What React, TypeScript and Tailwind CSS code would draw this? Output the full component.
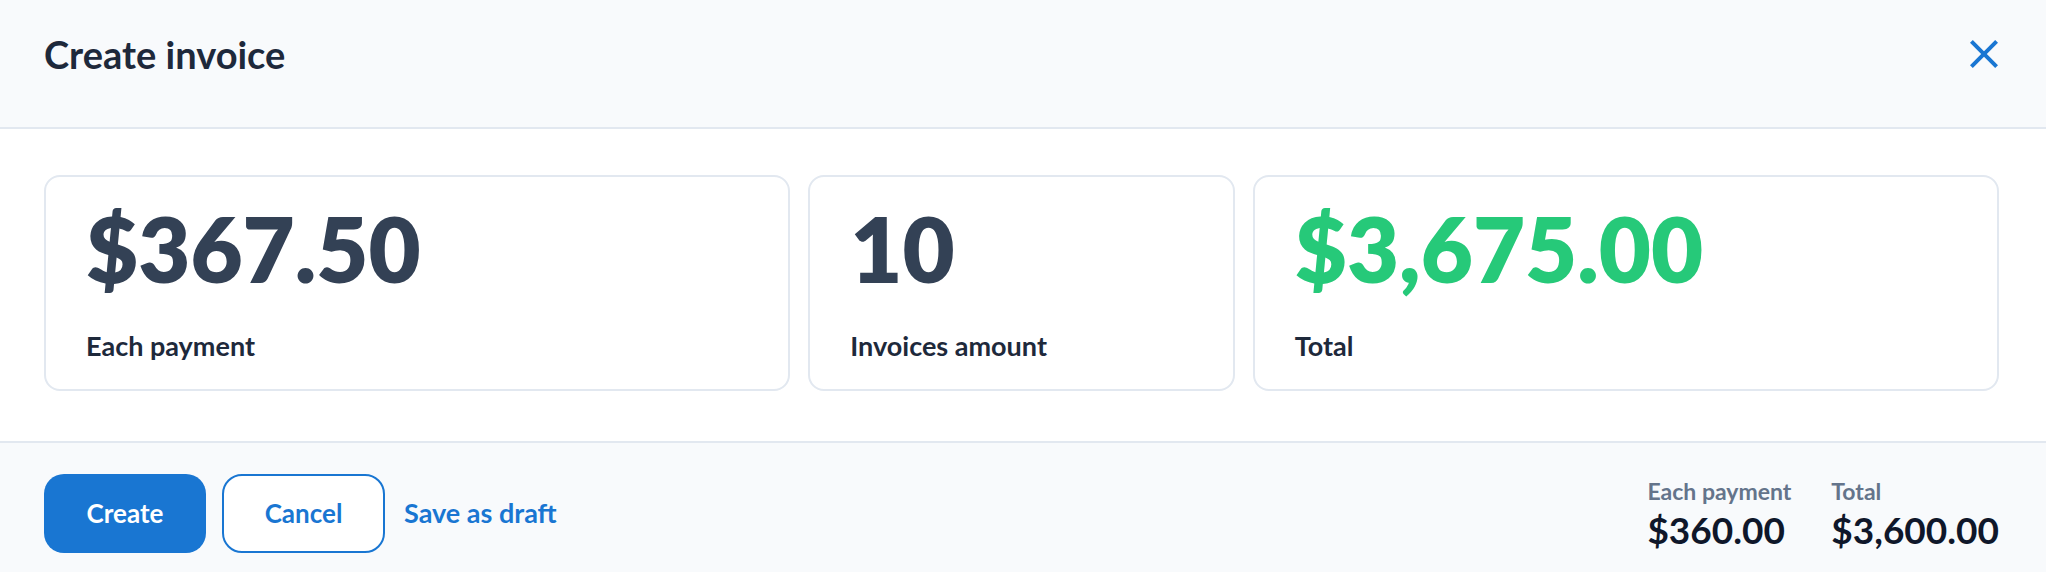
import React from "react";
import { MdClose } from "react-icons/md";

const font = { fontFamily: "Lato, 'Noto Sans', sans-serif" };

function StatCard({ value, label, green }: { value: string; label: string; green?: boolean }) {
  return (
    <div className="rounded-[16px] border-2 border-[#e2e8f0] bg-white px-[40px] pt-[27px] pb-[27px]">
      <div
        className={
          "text-[90px] leading-[89px] font-extrabold tracking-[0px] " +
          (green ? "text-[#26c979]" : "text-[#334155]")
        }
      >
        {value}
      </div>
      <div className="mt-[37px] text-[27px] leading-[32px] font-bold text-[#1e293b]">{label}</div>
    </div>
  );
}

export default function App() {
  return (
    <div className="w-[2046px] h-[572px] overflow-hidden bg-white flex flex-col" style={font}>
      <div className="bg-[#f8fafc] border-b-2 border-[#e2e8f0] pl-[44px] pr-[47px] pt-[30px] pb-[49px] flex items-center justify-between">
        <h1 className="text-[38px] leading-[48px] font-bold text-[#1e293b]">Create invoice</h1>
        <button className="w-[48px] h-[48px] -mr-[9px] text-[#1976d2] flex items-center justify-center">
          <MdClose size={48} />
        </button>
      </div>
      <div className="pl-[44px] pr-[47px] pt-[46px] pb-[50px] grid grid-cols-[7fr_4fr_7fr] gap-[18px]">
        <StatCard value="$367.50" label="Each payment" />
        <StatCard value="10" label="Invoices amount" />
        <StatCard value="$3,675.00" label="Total" green />
      </div>
      <div className="flex-1 bg-[#f8fafc] border-t-2 border-[#e2e8f0] pl-[44px] pr-[47px] pt-[31px] flex items-start justify-between">
        <div className="flex items-center">
          <button className="h-[79px] w-[162px] rounded-[20px] bg-[#1976d2] text-white text-[26px] font-bold">
            Create
          </button>
          <button className="ml-[16px] h-[79px] w-[163px] rounded-[20px] border-2 border-[#1976d2] bg-white text-[#1976d2] text-[26px] font-bold">
            Cancel
          </button>
          <button className="ml-[3px] px-[16px] h-[79px] text-[#1976d2] text-[27px] font-bold">
            Save as draft
          </button>
        </div>
        <div className="flex gap-[40px] pt-[3px]">
          <div className="flex flex-col">
            <span className="text-[23px] leading-[28px] font-bold text-[#64748b]">Each payment</span>
            <span className="mt-[5px] text-[37px] leading-[40px] font-bold text-[#0f172a]">$360.00</span>
          </div>
          <div className="flex flex-col">
            <span className="text-[23px] leading-[28px] font-bold text-[#64748b]">Total</span>
            <span className="mt-[5px] text-[37px] leading-[40px] font-bold text-[#0f172a]">$3,600.00</span>
          </div>
        </div>
      </div>
    </div>
  );
}
